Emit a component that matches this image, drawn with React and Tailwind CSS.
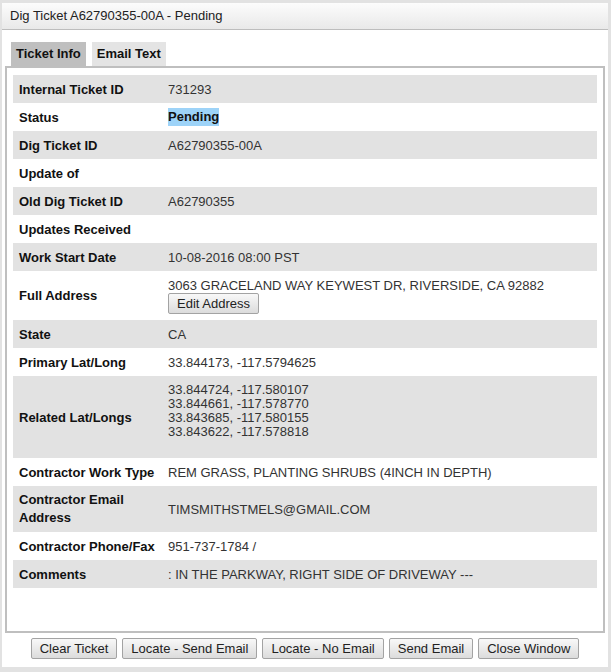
import React from "react";

const rows = [
  { label: "Internal Ticket ID", value: "731293" },
  { label: "Status", value: "Pending", highlight: true },
  { label: "Dig Ticket ID", value: "A62790355-00A" },
  { label: "Update of", value: "" },
  { label: "Old Dig Ticket ID", value: "A62790355" },
  { label: "Updates Received", value: "" },
  { label: "Work Start Date", value: "10-08-2016 08:00 PST" },
  { label: "Full Address", address: true, h: "h-[49px]" },
  { label: "State", value: "CA" },
  { label: "Primary Lat/Long", value: "33.844173, -117.5794625" },
  {
    label: "Related Lat/Longs",
    lines: [
      "33.844724, -117.580107",
      "33.844661, -117.578770",
      "33.843685, -117.580155",
      "33.843622, -117.578818",
    ],
    h: "h-[82px]",
  },
  { label: "Contractor Work Type", value: "REM GRASS, PLANTING SHRUBS (4INCH IN DEPTH)" },
  { label: "Contractor Email Address", value: "TIMSMITHSTMELS@GMAIL.COM", h: "h-[46px]" },
  { label: "Contractor Phone/Fax", value: "951-737-1784 /" },
  { label: "Comments", value: ": IN THE PARKWAY, RIGHT SIDE OF DRIVEWAY ---" },
];

const Button = ({ children, className = "" }) => (
  <button
    className={`h-[21px] px-[8px] rounded-[2px] border border-[#a3a3a3] bg-gradient-to-b from-[#f8f8f8] to-[#dcdcdc] text-[13px] leading-[19px] text-[#222] ${className}`}
  >
    {children}
  </button>
);

const App = () => {
  return (
    /* page behind the dialog */
    <div className="min-h-screen w-full bg-[#e2e2e2] pt-[3px] pl-[2px] font-['Liberation_Sans',Arial,sans-serif]">
      <div className="w-[606px] h-[664px] bg-white flex flex-col">
        {/* title bar */}
        <div className="h-[27px] flex items-center pl-[8px] border-b border-[#bdbdbd] bg-gradient-to-b from-[#fcfcfc] to-[#e9e9e9] text-[13px] text-[#222]">
          Dig Ticket A62790355-00A - Pending
        </div>

        <div className="px-[3px] pt-[12px]">
          {/* tabs */}
          <div className="flex gap-[6px] pl-[6px]">
            <div className="h-[24px] px-[5px] flex items-center bg-[#bfbfbf] text-[13px] font-bold text-[#111]">
              Ticket Info
            </div>
            <div className="h-[24px] px-[5px] flex items-center bg-[#e4e4e4] text-[13px] font-bold text-[#111]">
              Email Text
            </div>
          </div>

          {/* panel */}
          <div className="h-[567px] border-2 border-[#bfbfbf] px-[6px] pt-[7px]">
            {rows.map((r, i) => (
              <div
                key={r.label}
                className={`flex text-[13px] ${r.lines ? "items-start" : "items-center"} ${r.h || "h-[28px]"} ${i % 2 === 0 ? "bg-[#e2e2e2]" : "bg-white"}`}
              >
                <div
                  className={`w-[155px] shrink-0 self-center pl-[6px] pr-[4px] font-bold text-[#111] ${r.label === "Contractor Email Address" ? "leading-[18px]" : "leading-[15px]"}`}
                >
                  {r.label}
                </div>
                <div className={`flex-1 text-[#333] leading-[15px] ${r.lines ? "pt-[7px]" : ""}`}>
                  {r.highlight && (
                    <span className="bg-[#9dd3f8] font-bold text-[#111] leading-[18px] inline-block">
                      {r.value}
                    </span>
                  )}
                  {r.address && (
                    <div className="flex flex-col items-start">
                      <div>3063 GRACELAND WAY KEYWEST DR, RIVERSIDE, CA 92882</div>
                      <Button className="h-[20px] leading-[18px]">Edit Address</Button>
                    </div>
                  )}
                  {r.lines &&
                    r.lines.map((l) => (
                      <div key={l} className="leading-[14px]">
                        {l}
                      </div>
                    ))}
                  {!r.highlight && !r.address && !r.lines && r.value}
                </div>
              </div>
            ))}
          </div>

          {/* bottom buttons */}
          <div className="flex justify-center gap-[5px] mt-[5px]">
            <Button>Clear Ticket</Button>
            <Button>Locate - Send Email</Button>
            <Button>Locate - No Email</Button>
            <Button>Send Email</Button>
            <Button>Close Window</Button>
          </div>
        </div>
      </div>
    </div>
  );
};

export default App;
